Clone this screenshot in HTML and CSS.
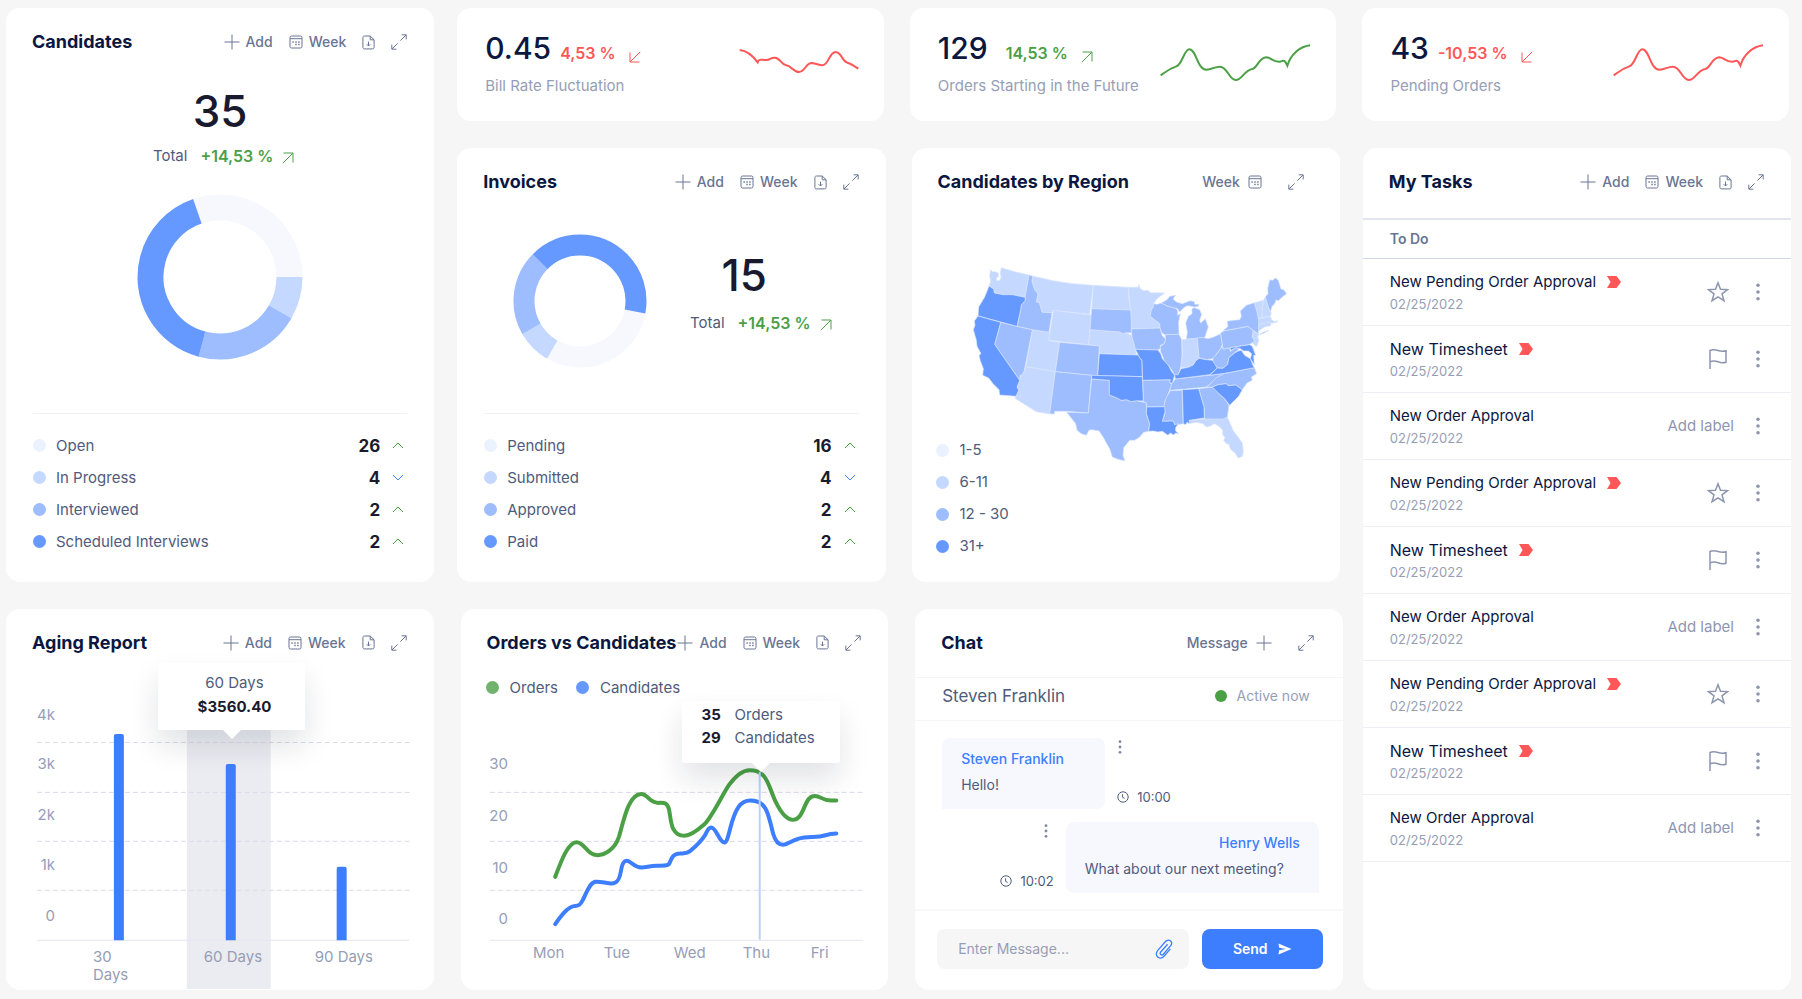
FILE: index.html
```html
<!DOCTYPE html>
<html lang="en">
<head>
<meta charset="utf-8">
<meta name="viewport" content="width=device-width, initial-scale=1">
<title>Recruiting dashboard</title>
<link rel="stylesheet" href="styles.css">
</head>
<body>
<svg class="sprite" aria-hidden="true">
  <symbol id="plus" viewBox="0 0 16 16"><path d="M8 0.5v15M0.5 8h15"/></symbol>
  <symbol id="calendar" viewBox="0 0 14 14"><rect x="1" y="1" width="12" height="12" rx="1.6"/><path d="M1 3.7h12"/><path d="M3.4 7h1.4M6.3 7h1.4M9.2 7h1.4M6.3 9.6h1.4M9.2 9.6h1.4" stroke-width="1.5"/></symbol>
  <symbol id="file" viewBox="0 0 13 15"><path d="M8.2 1H2.4C1.5 1 .9 1.6.9 2.4v10c0 .9.6 1.5 1.5 1.5h8.2c.9 0 1.5-.6 1.5-1.5V4.8zM8.2 1v3.8h3.9M6.5 6.600v4.200M4.700 9.200l1.800 1.800 1.800-1.800"/></symbol>
  <symbol id="expand" viewBox="0 0 16 16"><path d="M10.6.8h4.6v4.6M15 1L9.4 6.6M.8 10.6v4.6h4.6M1 15l5.6-5.6"/></symbol>
  <symbol id="up-right" viewBox="0 0 12 12"><path d="M1.5 1h9.5v9.5M11 1L.8 11.2"/></symbol>
  <symbol id="down-left" viewBox="0 0 12 12"><path d="M1 1.5V11h9.5M1 11L11.2.8"/></symbol>
  <symbol id="chev-up" viewBox="0 0 12 7"><path d="M1 6l5-5 5 5"/></symbol>
  <symbol id="chev-down" viewBox="0 0 12 7"><path d="M1 1l5 5 5-5"/></symbol>
  <symbol id="tag" viewBox="0 0 14 12"><path d="M0 0h9.5L14 6l-4.500 6H0l3.600-6z"/></symbol>
  <symbol id="star" viewBox="0 0 22 22"><path d="M11 1.800l2.500 6.500 7 .3-5.500 4.300 2 6.800-6-3.900-6 3.900 2-6.800L1.500 8.600l7-.3z"/></symbol>
  <symbol id="flag" viewBox="0 0 22 22"><path d="M3 21V2.500c3-1.500 5-1 8 0s5 1.200 8 .3v11.400c-3 1-5 .7-8-.4s-5-1.200-8 0"/></symbol>
  <symbol id="dots" viewBox="0 0 4 18"><circle cx="2" cy="2.200" r="1.800"/><circle cx="2" cy="9" r="1.800"/><circle cx="2" cy="15.800" r="1.800"/></symbol>
  <symbol id="clock" viewBox="0 0 12 12"><circle cx="6" cy="6" r="5.200"/><path d="M5.600 3.300v3l2 1.200"/></symbol>
  <symbol id="clip" viewBox="0 0 18 20"><path d="M12.600 5.200L5.700 13c-.8 1-.6 2 .1 2.600s1.700.5 2.500-.4l7.200-8.300c1.500-1.800 1.300-3.900 0-5.100s-3.500-1-5 .7L3 11.100c-2.300 2.700-2 5.400-.2 6.900s4.400 1.300 6.400-1l6.200-7.100"/></symbol>
  <symbol id="send" viewBox="0 0 14 12"><path d="M.5.500L13.500 6 .5 11.500l.6-4.300L8 6 1.100 4.800z"/></symbol>
</svg>

<main class="board">
  <section class="card candidates">
    <header class="card-head">
      <h2>Candidates</h2>
      <div class="actions">
        <button><svg class="i16"><use href="#plus"/></svg>Add</button>
        <button><svg class="i14"><use href="#calendar"/></svg>Week</button>
        <button aria-label="Export"><svg class="file"><use href="#file"/></svg></button>
        <button aria-label="Expand"><svg class="i16"><use href="#expand"/></svg></button>
      </div>
    </header>
    <div class="total">
      <p class="huge">35</p>
      <p class="total-row">Total <strong>+14,53 %</strong><svg class="trend"><use href="#up-right"/></svg></p>
    </div>
    <svg class="donut donut-lg" viewBox="0 0 166 166" role="img" aria-label="Candidates by stage">
      <g transform="translate(83 83)">
        <circle class="seg s1" r="69.500" pathLength="360" stroke-dasharray="109 251" transform="rotate(251)"/>
        <circle class="seg s2" r="69.500" pathLength="360" stroke-dasharray="30 330"/>
        <circle class="seg s3" r="69.500" pathLength="360" stroke-dasharray="75 285" transform="rotate(30)"/>
        <circle class="seg s4" r="69.500" pathLength="360" stroke-dasharray="146 214" transform="rotate(105)"/>
      </g>
    </svg>
    <ul class="stats">
      <li><i class="dot d1"></i><span>Open</span><b>26</b><svg class="chev"><use href="#chev-up"/></svg></li>
      <li><i class="dot d2"></i><span>In Progress</span><b>4</b><svg class="chev down"><use href="#chev-down"/></svg></li>
      <li><i class="dot d3"></i><span>Interviewed</span><b>2</b><svg class="chev"><use href="#chev-up"/></svg></li>
      <li><i class="dot d4"></i><span>Scheduled Interviews</span><b>2</b><svg class="chev"><use href="#chev-up"/></svg></li>
    </ul>
  </section>

  <div class="kpis">
    <section class="card kpi bad">
      <div>
        <p class="kpi-line"><span class="big">0.45</span><strong>4,53 %</strong><svg class="trend"><use href="#down-left"/></svg></p>
        <p class="kpi-label">Bill Rate Fluctuation</p>
      </div>
      <svg class="spark spark-sm" viewBox="862 130 360 120"><path d="M864 151C885 153 905 170 918 188C922 175 932 182 945 181C955 180 958 173 970 174C985 175 988 193 1002 196C1020 198 1025 217 1042 217C1060 217 1062 190 1080 190C1095 191 1100 197 1112 197C1132 196 1132 157 1152 157C1170 158 1170 183 1187 189C1198 192 1210 200 1220 207"/></svg>
    </section>
    <section class="card kpi good">
      <div>
        <p class="kpi-line"><span class="big">129</span><strong class="apart">14,53 %</strong><svg class="trend"><use href="#up-right"/></svg></p>
        <p class="kpi-label">Orders Starting in the Future</p>
      </div>
      <svg class="spark" viewBox="783 130 453 120"><path d="M785 227C800 217 810 207 832 200C850 195 855 149 871 149C892 149 895 210 922 210C940 210 945 201 963 201C985 201 990 241 1010 241C1030 241 1035 212 1060 208C1075 205 1080 173 1102 173C1118 174 1120 187 1142 186C1152 185 1155 175 1165 198C1175 165 1200 142 1233 137"/></svg>
    </section>
    <section class="card kpi bad">
      <div>
        <p class="kpi-line"><span class="big">43</span><strong>-10,53 %</strong><svg class="trend"><use href="#down-left"/></svg></p>
        <p class="kpi-label">Pending Orders</p>
      </div>
      <svg class="spark" viewBox="783 130 453 120"><path d="M785 227C800 217 810 207 832 200C850 195 855 149 871 149C892 149 895 210 922 210C940 210 945 201 963 201C985 201 990 241 1010 241C1030 241 1035 212 1060 208C1075 205 1080 173 1102 173C1118 174 1120 187 1142 186C1152 185 1155 175 1165 198C1175 165 1200 142 1233 137"/></svg>
    </section>
  </div>

  <div class="middle">
    <section class="card invoices">
      <header class="card-head">
        <h2>Invoices</h2>
        <div class="actions">
          <button><svg class="i16"><use href="#plus"/></svg>Add</button>
          <button><svg class="i14"><use href="#calendar"/></svg>Week</button>
          <button aria-label="Export"><svg class="file"><use href="#file"/></svg></button>
          <button aria-label="Expand"><svg class="i16"><use href="#expand"/></svg></button>
        </div>
      </header>
      <div class="invoice-body">
        <svg class="donut donut-sm" viewBox="0 0 134 134" role="img" aria-label="Invoices by status">
          <g transform="translate(67 67)">
            <circle class="seg s1" r="56" pathLength="360" stroke-dasharray="109 251" transform="rotate(10.700)"/>
            <circle class="seg s2" r="56" pathLength="360" stroke-dasharray="31 329" transform="rotate(119.700)"/>
            <circle class="seg s3" r="56" pathLength="360" stroke-dasharray="75 285" transform="rotate(150.300)"/>
            <circle class="seg s4" r="56" pathLength="360" stroke-dasharray="146 214" transform="rotate(224.800)"/>
          </g>
        </svg>
        <div class="total">
          <p class="huge">15</p>
          <p class="total-row">Total <strong>+14,53 %</strong><svg class="trend"><use href="#up-right"/></svg></p>
        </div>
      </div>
      <ul class="stats">
        <li><i class="dot d1"></i><span>Pending</span><b>16</b><svg class="chev"><use href="#chev-up"/></svg></li>
        <li><i class="dot d2"></i><span>Submitted</span><b>4</b><svg class="chev down"><use href="#chev-down"/></svg></li>
        <li><i class="dot d3"></i><span>Approved</span><b>2</b><svg class="chev"><use href="#chev-up"/></svg></li>
        <li><i class="dot d4"></i><span>Paid</span><b>2</b><svg class="chev"><use href="#chev-up"/></svg></li>
      </ul>
    </section>

    <section class="card region">
      <header class="card-head">
        <h2>Candidates by Region</h2>
        <div class="actions wide">
          <button>Week<svg class="i14"><use href="#calendar"/></svg></button>
          <button aria-label="Expand"><svg class="i16"><use href="#expand"/></svg></button>
        </div>
      </header>
      <svg class="map" viewBox="100 80 945 585" role="img" aria-label="Map of candidates per state">
        <g class="low">
          <path d="M152 88L158 94 167 94 176 99 177 108 170 114 171 121 180 121 184 112 182 98 185 82 225 94 268 104 256 171 218 163 190 163 164 158 162 146 148 137 153 122 150 108z"/>
          <path d="M279 107L340 121 400 130 461 135 450 222 341 210 337 217 307 216 299 187 290 185 295 160 286 150 277 124z"/>
          <path d="M341 210L455 224 447 313 327 300z"/>
          <path d="M278 268L331 276 327 301 360 306 347 394 258 379z"/>
          <path d="M258 379L347 394 330 521 290 514 226 474 237 450 232 440 240 420 241 405 248 403 254 392z"/>
          <path d="M461 135L566 141 568 175 573 209 456 205z"/>
          <path d="M451 268L540 275 550 280 560 277 575 285 585 310 590 343 479 340 479 317 447 313z"/>
          <path d="M566 141L596 141 597 132 602 145 612 151 625 150 634 158 650 157 675 158 655 172 641 190 641 200 635 208 632 228 645 238 660 250 661 263 575 266 573 215z"/>
          <path d="M727 298L773 293 778 352 768 362 760 375 740 381 725 383 724 375 728 345z"/>
          <path d="M748 540L795 536 835 536 863 530 872 550 880 570 895 590 908 608 911 630 909 648 895 653 888 640 872 626 868 612 860 610 852 600 856 592 848 580 850 571 838 558 825 550 810 558 800 560 790 550 770 546 748 550z"/>
          <path d="M939 270L957 280 954 290 958 300 950 320 938 307 937 290z"/>
          <path d="M944 187L972 180 968 200 967 232 957 236z"/>
          <path d="M972 180L977 170 987 205 995 218 992 228 967 232 968 200z"/>
          <path d="M957 236L992 228 996 238 1006 244 1014 240 1012 246 990 250 957 252z"/>
          <path d="M957 252L992 246 994 256 975 260 958 271z"/>
        </g>
        <g class="mid">
          <path d="M183 246L278 268 254 390 248 403 241 405 240 420 165 312z"/>
          <path d="M268 104L279 107 277 124 286 150 295 160 290 185 299 187 307 216 337 217 328 276 278 268 232 258 243 208 245 194 257 180 256 171z"/>
          <path d="M360 306L479 317 474 407 347 394z"/>
          <path d="M347 394L456 405 446 518 381 513 345 513 344 521 330 521z"/>
          <path d="M456 205L573 209 575 245 575 278 560 277 550 280 540 275 451 268z"/>
          <path d="M456 416L509 420 509 464 530 472 545 480 560 478 575 484 590 481 620 487 620 520 630 550 627 573 612 576 600 590 585 600 570 600 552 622 550 645 556 662 535 657 518 650 510 625 500 608 490 590 478 572 455 568 448 570 440 585 425 580 412 570 408 550 381 516 446 518z"/>
          <path d="M575 266L661 263 667 285 678 297 674 310 662 315 662 325 655 329 587 327 583 310 577 290z"/>
          <path d="M609 420L692 418 690 428 698 430 690 450 682 470 675 485 675 499 621 500 620 487 611 484z"/>
          <path d="M641 190L652 192 665 188 685 198 705 202 714 210 714 225 722 220 717 245 718 282 676 283 667 278 661 263 660 250 645 238 632 228 635 208 641 200z"/>
          <path d="M665 188L682 178 690 168 708 165 700 176 712 186 728 190 752 181 764 184 765 192 778 192 776 198 764 200 745 196 735 200 728 207 720 215 714 205 685 198z"/>
          <path d="M757 205L764 202 780 208 786 222 780 240 783 248 797 235 806 260 795 292 740 296 743 275 738 248 746 228 757 220z"/>
          <path d="M676 283L718 282 726 298 727 345 724 375 720 392 715 403 705 405 697 390 686 375 674 362 668 345 663 335 662 318 674 310 678 297z"/>
          <path d="M773 293L788 291 805 295 822 290 843 280 848 312 843 325 828 345 820 355 800 358 778 352z"/>
          <path d="M707 416L835 402 855 399 840 412 815 428 800 440 730 447 690 450 696 430z"/>
          <path d="M692 451L728 450 728 490 731 550 715 553 706 555 701 542 668 543 676 520 672 500 678 475z"/>
          <path d="M777 445L822 440 840 462 855 475 868 495 863 530 850 536 795 536 793 500z"/>
          <path d="M800 440L815 428 830 412 855 399 944 382 951 400 935 410 938 420 922 428 908 448 888 434 865 436 860 430 835 433 818 440z"/>
          <path d="M820 352L828 345 843 325 848 318 850 326 870 322 872 333 888 322 900 324 885 338 868 352 864 372 850 384 835 383 820 368z"/>
          <path d="M843 278L852 272 925 258 940 270 937 290 945 303 928 313 850 326z"/>
          <path d="M850 272L865 258 862 243 880 240 900 238 905 228 902 212 920 195 944 187 952 215 957 240 957 280 940 270 925 258z"/>
          <path d="M956 284L970 276 988 270 972 279z"/>
          <path d="M977 170L985 160 984 145 990 118 998 120 1008 113 1016 120 1024 146 1032 148 1041 160 1028 170 1015 182 1010 178 1004 192 997 198 993 214 987 203z"/>
        </g>
        <g class="high">
          <path d="M148 137L162 146 164 158 190 163 218 163 256 171 257 180 245 194 243 208 232 258 115 227 117 200 135 170z"/>
          <path d="M115 227L183 246 165 312 240 420 232 440 237 450 229 468 180 464 178 448 160 430 147 413 129 405 131 385 122 362 118 345 124 340 112 318 110 300 101 268 106 255 104 242z"/>
          <path d="M479 340L598 344 600 352 607 360 608 409 474 406z"/>
          <path d="M456 405L608 409 611 482 590 481 575 484 560 478 545 480 530 472 509 464 509 420 456 416z"/>
          <path d="M587 327L655 329 663 340 668 355 686 375 697 395 705 405 698 428 690 428 692 418 609 420 607 360 600 352z"/>
          <path d="M621 500L675 499 676 515 668 543 701 542 705 553 716 550 708 562 708 572 718 580 708 578 702 584 692 578 685 585 668 573 655 575 640 572 627 573 630 550 620 520z"/>
          <path d="M705 403L715 403 724 385 745 381 760 375 768 362 778 354 800 358 818 360 833 383 810 403 707 416z"/>
          <path d="M728 448L777 445 793 500 794 533 748 540 750 550 742 546 738 553 731 550z"/>
          <path d="M818 440L835 433 860 430 865 436 888 434 908 448 897 468 885 480 870 495 855 475 840 462z"/>
          <path d="M810 405L833 383 850 384 864 372 868 352 885 338 895 332 905 330 915 345 932 355 940 375 944 382 855 399z"/>
          <path d="M870 322L930 313 938 318 948 345 942 345 944 373 932 355 936 340 926 332 912 332 900 324 888 322 875 330z"/>
        </g>
      </svg>
      <ul class="legend">
        <li><i class="dot d1"></i>1-5</li>
        <li><i class="dot d2"></i>6-11</li>
        <li><i class="dot d3"></i>12 - 30</li>
        <li><i class="dot d4"></i>31+</li>
      </ul>
    </section>
  </div>

  <section class="card tasks">
    <header class="card-head">
      <h2>My Tasks</h2>
      <div class="actions">
        <button><svg class="i16"><use href="#plus"/></svg>Add</button>
        <button><svg class="i14"><use href="#calendar"/></svg>Week</button>
        <button aria-label="Export"><svg class="file"><use href="#file"/></svg></button>
        <button aria-label="Expand"><svg class="i16"><use href="#expand"/></svg></button>
      </div>
    </header>
    <h3>To Do</h3>
    <ul class="task-list">
      <li><div><p class="task">New Pending Order Approval<svg class="tag"><use href="#tag"/></svg></p><time>02/25/2022</time></div><button aria-label="Star"><svg class="i22"><use href="#star"/></svg></button><button class="more" aria-label="More"><svg class="dots"><use href="#dots"/></svg></button></li>
      <li><div><p class="task lg">New Timesheet<svg class="tag"><use href="#tag"/></svg></p><time>02/25/2022</time></div><button aria-label="Flag"><svg class="i22"><use href="#flag"/></svg></button><button class="more" aria-label="More"><svg class="dots"><use href="#dots"/></svg></button></li>
      <li><div><p class="task">New Order Approval</p><time>02/25/2022</time></div><button class="add-label">Add label</button><button class="more" aria-label="More"><svg class="dots"><use href="#dots"/></svg></button></li>
      <li><div><p class="task">New Pending Order Approval<svg class="tag"><use href="#tag"/></svg></p><time>02/25/2022</time></div><button aria-label="Star"><svg class="i22"><use href="#star"/></svg></button><button class="more" aria-label="More"><svg class="dots"><use href="#dots"/></svg></button></li>
      <li><div><p class="task lg">New Timesheet<svg class="tag"><use href="#tag"/></svg></p><time>02/25/2022</time></div><button aria-label="Flag"><svg class="i22"><use href="#flag"/></svg></button><button class="more" aria-label="More"><svg class="dots"><use href="#dots"/></svg></button></li>
      <li><div><p class="task">New Order Approval</p><time>02/25/2022</time></div><button class="add-label">Add label</button><button class="more" aria-label="More"><svg class="dots"><use href="#dots"/></svg></button></li>
      <li><div><p class="task">New Pending Order Approval<svg class="tag"><use href="#tag"/></svg></p><time>02/25/2022</time></div><button aria-label="Star"><svg class="i22"><use href="#star"/></svg></button><button class="more" aria-label="More"><svg class="dots"><use href="#dots"/></svg></button></li>
      <li><div><p class="task lg">New Timesheet<svg class="tag"><use href="#tag"/></svg></p><time>02/25/2022</time></div><button aria-label="Flag"><svg class="i22"><use href="#flag"/></svg></button><button class="more" aria-label="More"><svg class="dots"><use href="#dots"/></svg></button></li>
      <li><div><p class="task">New Order Approval</p><time>02/25/2022</time></div><button class="add-label">Add label</button><button class="more" aria-label="More"><svg class="dots"><use href="#dots"/></svg></button></li>
    </ul>
  </section>

  <div class="bottom">
    <section class="card aging">
      <header class="card-head">
        <h2>Aging Report</h2>
        <div class="actions">
          <button><svg class="i16"><use href="#plus"/></svg>Add</button>
          <button><svg class="i14"><use href="#calendar"/></svg>Week</button>
          <button aria-label="Export"><svg class="file"><use href="#file"/></svg></button>
          <button aria-label="Expand"><svg class="i16"><use href="#expand"/></svg></button>
        </div>
      </header>
      <svg class="chart" viewBox="0 68 428 313">
        <rect class="band" x="181" y="110" width="84" height="271"/>
        <path class="grid" d="M31 133.500H404M31 183.500H404M31 232.500H404M31 281.500H404"/>
        <path class="axis" d="M31 331.500H404"/>
        <path class="bars" d="M108 331.500V127q0-2 2-2h6q2 0 2 2V331.500zM220 331.500V157q0-2 2-2h6q2 0 2 2V331.500zM331 331.500V260q0-2 2-2h6q2 0 2 2V331.500z"/>
        <g class="y-labels"><text x="49" y="111">4k</text><text x="49" y="160">3k</text><text x="49" y="211">2k</text><text x="49" y="261">1k</text><text x="49" y="312">0</text></g>
        <g class="x-labels"><text x="87" y="353">30</text><text x="87" y="371">Days</text><text x="198" y="353">60 Days</text><text x="309" y="353">90 Days</text></g>
      </svg>
      <div class="tip tip-aging"><span>60 Days</span><b>$3560.40</b></div>
    </section>

    <section class="card orders">
      <header class="card-head">
        <h2>Orders vs Candidates</h2>
        <div class="actions">
          <button><svg class="i16"><use href="#plus"/></svg>Add</button>
          <button><svg class="i14"><use href="#calendar"/></svg>Week</button>
          <button aria-label="Export"><svg class="file"><use href="#file"/></svg></button>
          <button aria-label="Expand"><svg class="i16"><use href="#expand"/></svg></button>
        </div>
      </header>
      <ul class="series"><li><i class="dot green"></i>Orders</li><li><i class="dot d4"></i>Candidates</li></ul>
      <svg class="chart" viewBox="0 90 428 291">
        <path class="grid" d="M29 183.500H402M29 232.500H402M29 281.500H402"/>
        <path class="axis" d="M29 331.500H402"/>
        <g transform="translate(-11 -9) scale(.33333)">
          <path class="line orders-line" d="M316 831C335 780 355 727 380 727C405 727 410 766 443 766C465 766 495 748 507 712C520 670 535 582 574 582C595 582 595 608 625 609C640 609 652 605 658 630C664 660 662 708 704 708C720 708 745 690 762 675C785 655 820 580 838 555C855 532 875 511 900 511C955 511 955 560 980 610C995 640 1012 660 1030 660C1065 660 1062 588 1095 588C1115 588 1115 602 1145 602H1160"/>
          <path class="line cand-line" d="M316 973C332 950 352 922 372 919C385 917 390 918 398 902C410 880 418 850 436 846C450 844 470 851 486 851C500 851 508 843 513 815C517 790 522 783 530 783C545 783 550 803 575 803C590 803 600 798 620 798C640 798 650 798 656 794C664 788 662 762 690 761C705 760 712 762 722 753C737 740 755 722 765 707C771 698 774 683 784 683C800 683 808 727 824 728C838 727 840 660 866 622C876 607 888 602 902 602C955 602 956 650 970 700C976 722 984 735 1000 735C1012 735 1022 724 1045 717C1065 711 1075 712 1100 711C1120 711 1130 702 1160 701"/>
        </g>
        <path class="cursor" d="M299 163V331"/>
        <g class="y-labels"><text x="47" y="160">30</text><text x="47" y="212">20</text><text x="47" y="264">10</text><text x="47" y="315">0</text></g>
        <g class="x-labels"><text x="72" y="349">Mon</text><text x="143" y="349">Tue</text><text x="213" y="349">Wed</text><text x="282" y="349">Thu</text><text x="350" y="349">Fri</text></g>
      </svg>
      <dl class="tip tip-orders"><dt>35</dt><dd>Orders</dd><dt>29</dt><dd>Candidates</dd></dl>
    </section>

    <section class="card chat">
      <header class="card-head">
        <h2>Chat</h2>
        <div class="actions wide">
          <button>Message<svg class="i16"><use href="#plus"/></svg></button>
          <button aria-label="Expand"><svg class="i16"><use href="#expand"/></svg></button>
        </div>
      </header>
      <div class="contact"><p>Steven Franklin</p><span class="status"><i class="dot active"></i>Active now</span></div>
      <div class="messages">
        <div class="msg">
          <div class="bubble"><strong>Steven Franklin</strong><p>Hello!</p></div>
          <div class="meta"><button aria-label="More"><svg class="dots-sm"><use href="#dots"/></svg></button><span><svg class="i12"><use href="#clock"/></svg>10:00</span></div>
        </div>
        <div class="msg mine">
          <div class="meta"><button aria-label="More"><svg class="dots-sm"><use href="#dots"/></svg></button><span><svg class="i12"><use href="#clock"/></svg>10:02</span></div>
          <div class="bubble"><strong>Henry Wells</strong><p>What about our next meeting?</p></div>
        </div>
      </div>
      <form class="composer">
        <div class="field"><input type="text" placeholder="Enter Message..." aria-label="Message"><button type="button" aria-label="Attach"><svg class="clip"><use href="#clip"/></svg></button></div>
        <button type="button" class="send">Send<svg><use href="#send"/></svg></button>
      </form>
    </section>
  </div>
</main>
</body>
</html>
```

FILE: styles.css
```css
* { box-sizing: border-box; margin: 0; padding: 0; }
body {
  background: #f6f6f6;
  color: #4f5b7c;
  font: 15px/20px Inter, "Liberation Sans", sans-serif;
}
ul { list-style: none; }
button { border: 0; background: none; color: inherit; font: inherit; cursor: pointer; }
svg { display: block; flex: none; fill: none; stroke: currentColor; }
.sprite { position: absolute; width: 0; height: 0; }

.board {
  display: grid;
  grid-template-columns: repeat(4, minmax(0, 1fr));
  grid-template-rows: auto 433fr 381fr;
  gap: 27px 24px;
  min-height: 100vh;
  padding: 8px 11px 9px 6px;
}
.candidates { grid-area: 1 / 1 / 3 / 2; }
.kpis { grid-area: 1 / 2 / 2 / 5; display: grid; grid-template-columns: repeat(3, minmax(0, 1fr)); gap: 26px; margin: 0 2px 0 -1px; }
.middle { grid-area: 2 / 2 / 3 / 4; display: grid; grid-template-columns: repeat(2, minmax(0, 1fr)); gap: 26px; margin: 0 -1px; }
.tasks { grid-area: 2 / 4 / 4 / 5; }
.bottom { grid-area: 3 / 1 / 4 / 4; display: grid; grid-template-columns: repeat(3, minmax(0, 1fr)); gap: 27px; margin-right: -4px; }

.card { position: relative; display: flex; flex-direction: column; background: #fff; border-radius: 14px; }
.card-head { display: flex; align-items: center; justify-content: space-between; height: 68px; padding: 0 27px 0 26px; white-space: nowrap; }
h2 { color: #0b1740; font-size: 18px; font-weight: 700; line-height: 24px; }
.actions { display: flex; align-items: center; gap: 16px; color: #697593; font-size: 14px; font-weight: 500; }
.actions button { display: flex; align-items: center; gap: 6px; }
.actions.wide { gap: 26px; }
.actions.wide button { gap: 8px; }
.region .actions { padding-right: 9px; }
.chat .actions { padding-right: 2px; }
.actions svg { stroke-width: 1; }
.i16 { width: 16px; height: 16px; }
.i14 { width: 14px; height: 14px; }
.i12 { width: 12px; height: 12px; }
.i22 { width: 22px; height: 22px; stroke-width: 1.500; }
.file { width: 13px; height: 15px; }

.total { display: flex; flex-direction: column; align-items: center; gap: 9px; }
.candidates .total { padding-top: 9px; }
.candidates .total-row { padding-left: 7px; }
.huge { color: #1a1a2e; font-size: 44px; font-weight: 450; line-height: 52px; }
.total-row { display: flex; align-items: center; gap: 9px; }
.total-row strong { margin-left: 4px; color: #4ba046; font-size: 16px; font-weight: 600; }
.trend { width: 12px; height: 12px; margin-top: 4px; color: #4ba046; }

.donut .seg { stroke-width: 26; }
.donut-sm .seg { stroke-width: 21; }
.donut-lg { width: 166px; height: 166px; margin: 28px auto 0; }
.donut-sm { width: 134px; height: 134px; }
.s1 { stroke: #f7f8fd; }
.s2 { stroke: #c5d8ff; }
.s3 { stroke: #9dbdff; }
.s4 { stroke: #6699ff; }

.stats { margin: auto 27px 24px; padding-top: 16px; border-top: 1px solid #f2f2f3; }
.stats li { display: flex; align-items: center; height: 32px; }
.stats span { flex: 1; padding-left: 10px; }
.stats b { color: #1a1a2e; font-size: 17px; font-weight: 700; }
.dot { width: 13px; height: 13px; border-radius: 50%; }
.d1 { background: #ebf2ff; }
.d2 { background: #c5d8ff; }
.d3 { background: #9dbdff; }
.d4 { background: #6699ff; }
.green { background: #70b26e; }
.chev { width: 12px; height: 7px; margin: 0 3px 0 12px; color: #4ba046; }
.chev.down { color: #3d7eff; }

.kpi { flex-direction: row; justify-content: space-between; padding: 22px 25px 20px 28px; min-height: 113px; }
.kpi-line { display: flex; align-items: baseline; line-height: 36px; }
.big { color: #0b1740; font-size: 30px; font-weight: 450; }
.kpi strong { margin-left: 9px; font-size: 16px; font-weight: 600; }
.kpi strong.apart { margin-left: 18px; }
.kpi .trend { align-self: center; margin: 12px 0 0 13px; }
.kpi-label { margin-top: 5px; color: #969eb6; white-space: nowrap; }
.bad strong, .bad .trend, .bad .spark { color: #ff5757; }
.good strong, .good .trend, .good .spark { color: #4ba046; }
.spark { width: 151px; height: 40px; margin-top: 13px; stroke-width: 6; }
.spark-sm { width: 120px; }

.invoice-body { display: flex; align-items: center; justify-content: space-between; padding: 18px 54px 0 56px; }
.invoice-body .total { gap: 12px; padding-bottom: 21px; }
.invoice-body .huge { padding-right: 33px; }

.map { width: 315px; height: 195px; max-width: 100%; margin: 51px auto 0 61px; stroke: #d9e6ff; stroke-width: 2; stroke-linejoin: round; }
.low { fill: #c5d8ff; }
.mid { fill: #9dbdff; }
.high { fill: #6699ff; }
.legend { margin: -28px 0 0 24px; position: relative; }
.legend li { display: flex; align-items: center; gap: 11px; height: 32px; }

.tasks h3 { height: 41px; margin-top: 2px; padding: 9px 27px 0; border-top: 2px solid #e2e5f0; border-bottom: 1px solid #d0d7ea; color: #697593; font-size: 14px; font-weight: 600; }
.task-list li { display: flex; align-items: center; height: 67px; padding: 0 24px 0 27px; border-bottom: 1px solid #eceef4; color: #8d96ae; }
.task-list div { flex: 1; padding-top: 2px; }
.task { display: flex; align-items: center; gap: 11px; color: #0b1740; line-height: 22px; white-space: nowrap; }
.task.lg { font-size: 16px; }
.tag { width: 14px; height: 12px; stroke: none; fill: #ff5757; }
.tasks time { display: block; font-size: 13px; line-height: 22px; color: #969eb6; }
.add-label { color: #8f96b3; margin-right: -5px; }
.more { width: 18px; margin-left: 20px; display: flex; justify-content: center; }
.dots { width: 4px; height: 18px; fill: currentColor; stroke: none; }
.dots-sm { width: 4px; height: 14px; fill: currentColor; stroke: none; }

.chart { width: 100%; height: auto; font-size: 15px; border-radius: 0 0 14px 14px; }
.chart text { fill: #969eb6; stroke: none; }
.y-labels { text-anchor: end; }
.grid { stroke: #d9dbe7; stroke-dasharray: 5 3; }
.axis { stroke: #e4e5ef; }
.band { fill: #ebecf2; stroke: none; }
.bars { fill: #3d7eff; stroke: none; }
.line { stroke-width: 12; stroke-linecap: round; stroke-linejoin: round; }
.orders-line { stroke: #4ba046; }
.cand-line { stroke: #3d7eff; }
.cursor { stroke: #b9d1ff; stroke-width: 2; }
.tip { position: absolute; background: #fff; border-radius: 2px; box-shadow: 0 16px 30px rgba(20, 24, 40, 0.12); }
.tip::after { content: ""; position: absolute; top: 100%; left: 50%; margin-left: -9px; border: 9px solid transparent; border-top-color: #fff; border-bottom: 0; }
.tip-aging { top: 54px; left: 152px; width: 147px; height: 67px; display: flex; flex-direction: column; align-items: center; gap: 4px; padding: 10px 0 0 6px; }
.tip b, .tip dt { color: #1a1a2e; font-weight: 700; }
.tip-orders { top: 92px; left: 221px; width: 158px; height: 62px; display: grid; grid-template-columns: 33px 1fr; align-content: start; row-gap: 3px; padding: 4px 20px; }
.series { display: flex; gap: 18px; padding: 0 25px; height: 22px; }
.series li { display: flex; align-items: center; gap: 11px; }

.contact { display: flex; align-items: center; justify-content: space-between; height: 44px; padding: 0 33px 5px 27px; border: solid #f5f5f7; border-width: 1px 0; font-size: 17px; }
.status { display: flex; align-items: center; gap: 10px; color: #969eb6; font-size: 14px; }
.active { width: 12px; height: 12px; background: #4ba046; }
.messages { display: flex; flex-direction: column; gap: 13px; flex: 1; padding: 17px 24px 14px 27px; font-size: 14px; }
.msg { display: flex; gap: 12px; }
.mine { justify-content: flex-end; }
.bubble { min-width: 163px; padding: 11px 19px 0; height: 71px; border-radius: 8px 8px 8px 0; background: #f7f8fd; }
.bubble strong { display: block; color: #3d7eff; font-weight: 500; }
.bubble p { margin-top: 6px; }
.mine .bubble { min-width: 253px; border-radius: 8px 8px 0 8px; }
.mine strong { text-align: right; }
.meta { display: flex; flex-direction: column; justify-content: space-between; align-items: flex-start; padding: 2px 0; font-size: 13px; }
.mine .meta { align-items: flex-end; }
.meta button { padding: 0 1px; color: #7f89a3; }
.mine .meta button { padding-right: 6px; }
.meta span { display: flex; align-items: center; gap: 8px; }
.composer { display: flex; gap: 13px; padding: 18px 20px 21px 22px; border-top: 2px solid #f8f8fa; }
.field { display: flex; flex: 1; align-items: center; min-width: 0; height: 40px; padding: 0 16px 0 21px; border-radius: 8px; background: #f6f6f6; }
.field input { flex: 1; min-width: 0; border: 0; outline: 0; background: none; font: inherit; font-size: 14px; color: #4f5b7c; }
.field input::placeholder { color: #969eb6; opacity: 1; }
.clip { width: 18px; height: 20px; color: #3d7eff; stroke-width: 1.300; }
.send { display: flex; align-items: center; justify-content: center; gap: 10px; width: 121px; height: 40px; border-radius: 8px; background: #3d7eff; color: #fff; font-size: 14px; font-weight: 600; }
.send svg { width: 14px; height: 12px; fill: #fff; stroke: none; }
```
